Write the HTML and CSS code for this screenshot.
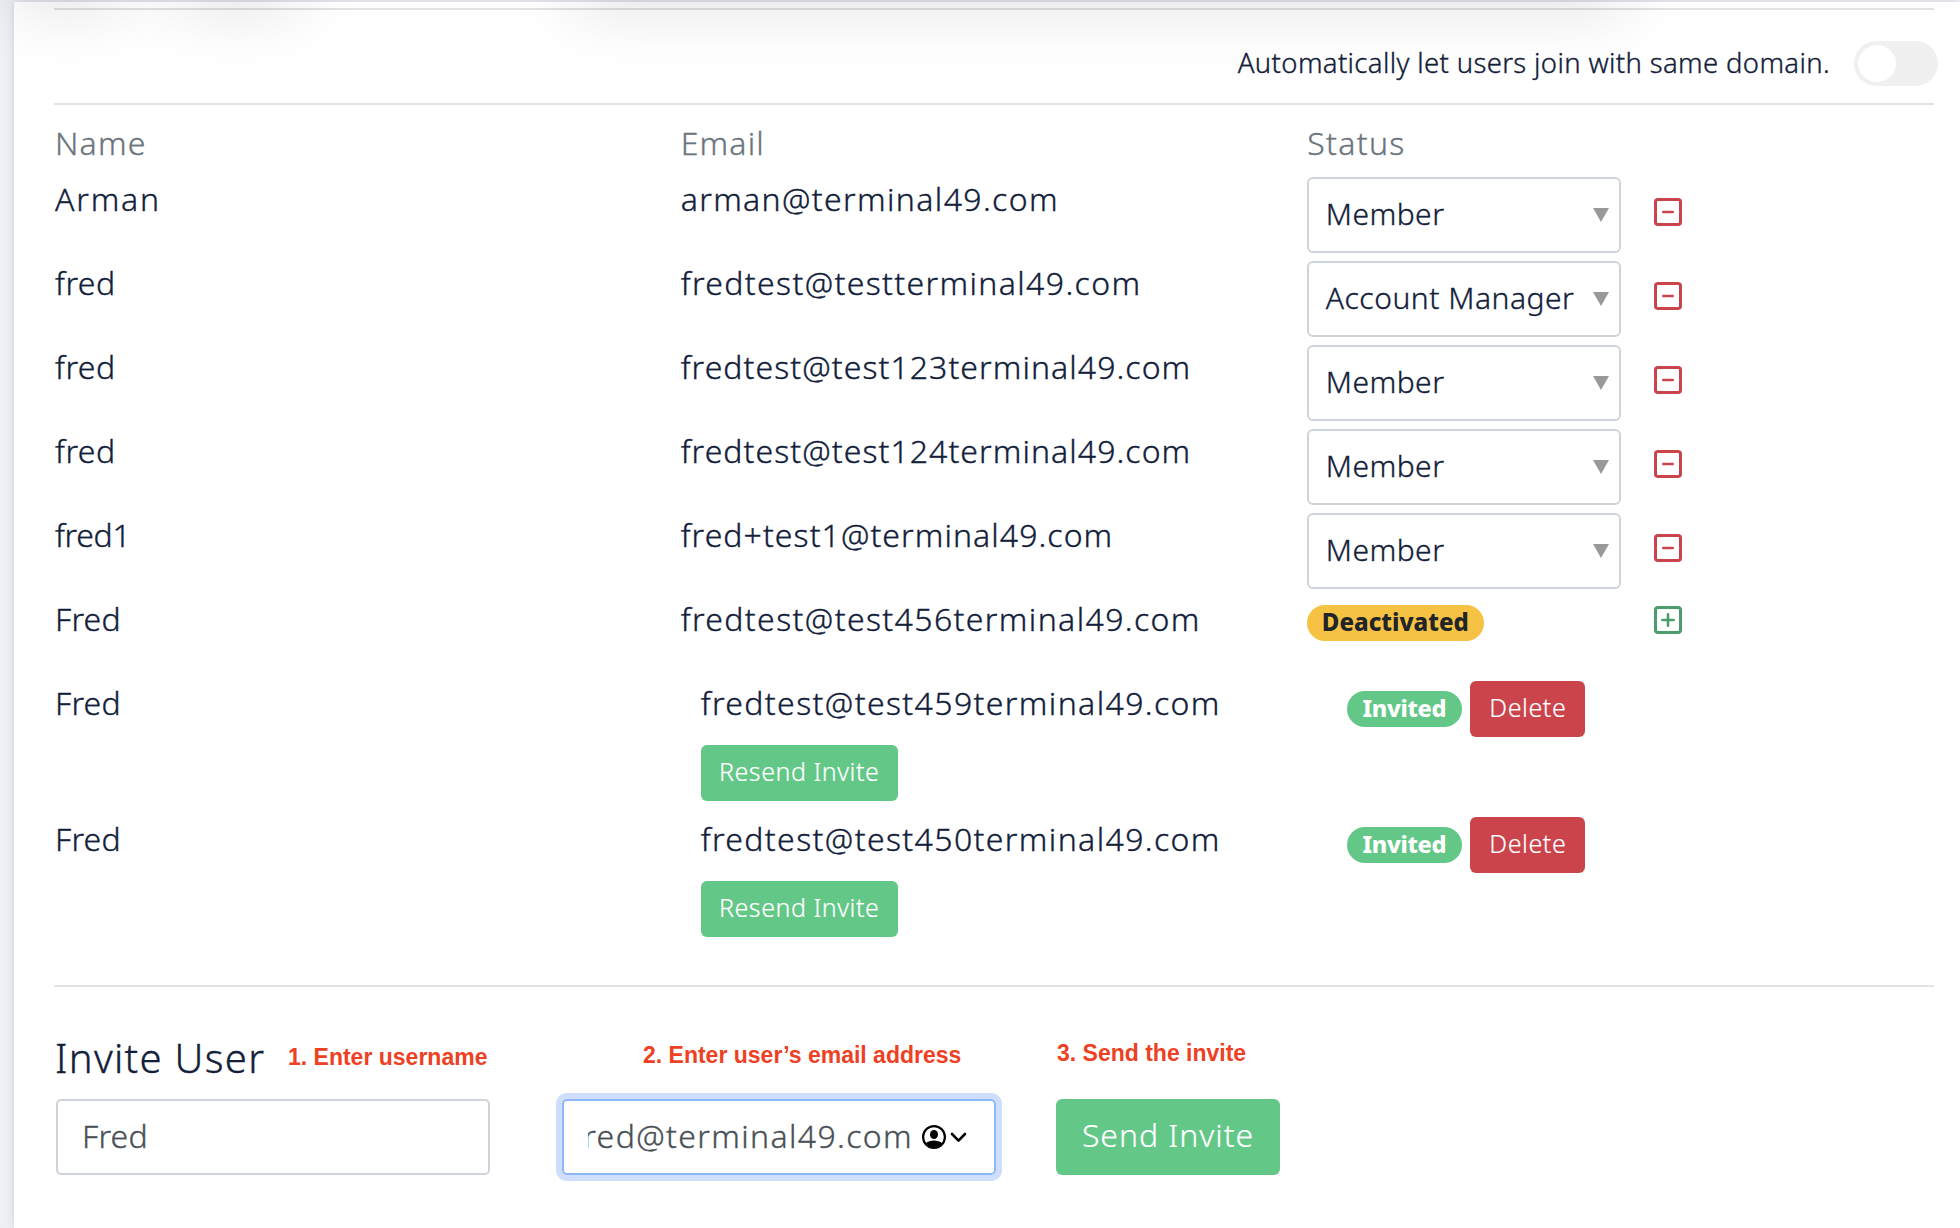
FILE: index.html
```html
<!DOCTYPE html>
<html lang="en">
<head>
<meta charset="utf-8">
<title>Account users</title>
<link rel="stylesheet" href="styles.css">
</head>
<body>
<svg width="0" height="0" class="sprite" aria-hidden="true">
  <symbol id="minus" viewBox="0 0 28 28"><rect x="1.5" y="1.5" width="25" height="25" rx="2.5" fill="none" stroke="currentColor" stroke-width="3"/><path d="M9.300 14h9.400" stroke="currentColor" stroke-width="2.6" stroke-linecap="round"/></symbol>
  <symbol id="plus" viewBox="0 0 28 28"><rect x="1.5" y="1.5" width="25" height="25" rx="2.5" fill="none" stroke="currentColor" stroke-width="3"/><path d="M8.3 14h11.4M14 8.3v11.4" stroke="currentColor" stroke-width="2.6" stroke-linecap="round"/></symbol>
</svg>
<main class="card">
  <section class="domain">
    <span class="domain-label">Automatically let users join with same domain.</span>
    <span class="toggle"><i class="knob"></i></span>
  </section>
  <section class="users">
    <div class="row head"><span class="name">Name</span><span>Email</span><span class="ls-status">Status</span></div>
    <div class="row"><span class="name arman">Arman</span><span>arman@terminal49.com</span><div class="select"><span class="member">Member</span><i class="arrow"></i></div><svg class="icon"><use href="#minus"/></svg></div>
    <div class="row"><span class="name">fred</span><span>fredtest@testterminal49.com</span><div class="select"><span>Account Manager</span><i class="arrow"></i></div><svg class="icon"><use href="#minus"/></svg></div>
    <div class="row"><span class="name">fred</span><span class="digits">fredtest@test123terminal49.com</span><div class="select"><span class="member">Member</span><i class="arrow"></i></div><svg class="icon"><use href="#minus"/></svg></div>
    <div class="row"><span class="name">fred</span><span class="digits">fredtest@test124terminal49.com</span><div class="select"><span class="member">Member</span><i class="arrow"></i></div><svg class="icon"><use href="#minus"/></svg></div>
    <div class="row"><span class="name numbered">fred1</span><span class="digits">fred+test1@terminal49.com</span><div class="select"><span class="member">Member</span><i class="arrow"></i></div><svg class="icon"><use href="#minus"/></svg></div>
    <div class="row"><span class="name capital">Fred</span><span class="wide">fredtest@test456terminal49.com</span><div class="status"><span class="badge warning">Deactivated</span></div><svg class="icon add"><use href="#plus"/></svg></div>
    <div class="row invited"><span class="name capital">Fred</span><div class="email"><span class="wide">fredtest@test459terminal49.com</span><span class="btn resend">Resend Invite</span></div><div class="actions"><span class="badge success">Invited</span><span class="btn delete">Delete</span></div></div>
    <div class="row invited"><span class="name capital">Fred</span><div class="email"><span class="wide">fredtest@test450terminal49.com</span><span class="btn resend">Resend Invite</span></div><div class="actions"><span class="badge success">Invited</span><span class="btn delete">Delete</span></div></div>
  </section>
  <section class="invite">
    <h2>Invite User</h2>
    <form class="form">
      <div class="field capital">Fred</div>
      <div class="field focused">
        <div class="value"><span>fred@terminal49.com</span></div>
        <svg class="autofill" viewBox="0 0 46 24"><circle cx="12" cy="12" r="10.9" fill="none" stroke="#000" stroke-width="2.2"/><ellipse cx="12" cy="9.5" rx="4" ry="4.6"/><path d="M3.6 18.6C6 16.4 9 15.6 12 15.6s6 .8 8.400 3C18.300 21.500 15.300 23 12 23s-6.300-1.500-8.400-4.400z"/><path d="M30 9l6.500 6.600L43 9" fill="none" stroke="#000" stroke-width="2.6" stroke-linecap="round" stroke-linejoin="round"/></svg>
      </div>
      <div class="btn send">Send Invite</div>
    </form>
  </section>
</main>
<div class="shade shade-a"></div><div class="shade shade-b"></div><div class="shade shade-c"></div>
<span class="note note-1">1. Enter username</span>
<span class="note note-2">2. Enter user’s email address</span>
<span class="note note-3">3. Send the invite</span>
</body>
</html>
```
FILE: styles.css
```css
* { box-sizing: border-box; }
body {
  margin: 0;
  width: 1960px;
  height: 1228px;
  overflow: hidden;
  position: relative;
  background: #eff0f6;
  padding: 2px 0 0 14px;
  font: 300 32px/43px "Noto Sans", sans-serif;
  color: #12203a;
  letter-spacing: 1.36px;
  -webkit-text-stroke: .35px currentColor;
}
.sprite { position: absolute; }
.card {
  height: 1226px;
  padding: 6px 26px 0 40px;
  background: #fff;
  box-shadow: 0 0 9px rgba(0, 0, 0, .13);
}
.domain {
  height: 97px;
  border: solid #e2e2e2;
  border-width: 2px 0;
  display: flex;
  align-items: center;
  justify-content: flex-end;
  padding-top: 12px;
  gap: 24px;
}
.domain-label { font-size: 27.5px; letter-spacing: .35px; margin-top: -1px; }
.toggle {
  width: 84px;
  height: 45px;
  margin: 2px -4px 0 0;
  border-radius: 23px;
  background: #f0f0f0;
  padding: 4px;
}
.knob { display: block; width: 38px; height: 37px; border-radius: 50%; background: #fff; }
.users { padding-top: 16px; height: 882px; border-bottom: 2px solid #e4e4e6; }
.row {
  display: grid;
  grid-template-columns: 626.67px 626.67px 313.33px 1fr;
  height: 84px;
}
.name { padding-left: 1px; letter-spacing: .5px; }
.head { height: 56px; color: #6c757d; letter-spacing: 1.2px; }
.head .name { letter-spacing: 1.2px; }
.ls-status { letter-spacing: 1.3px; }
.row .arman { letter-spacing: 1.8px; }
.digits { letter-spacing: 1.06px; }
.numbered { letter-spacing: -.3px; }
.capital { letter-spacing: .2px; }
.wide { letter-spacing: 1.38px; }
.select {
  height: 76px;
  border: 2px solid #ced4da;
  border-radius: 6px;
  display: flex;
  align-items: center;
  justify-content: space-between;
  padding: 0 10px 4px 16.5px;
  font-size: 30px;
  letter-spacing: .52px;
}
.member { letter-spacing: .45px; }
.arrow { border: solid transparent; border-width: 14px 8px 0; border-top-color: #999; margin-top: 4px; }
.icon { width: 28px; height: 28px; margin: 21px 0 0 33px; color: #cc444b; }
.icon.add { margin-top: 9px; color: #4b9e6b; }
.status { padding-top: 8px; line-height: 0; }
.badge {
  display: inline-block;
  height: 36px;
  border-radius: 18px;
  font-size: 24px;
  font-weight: 800;
  line-height: 34px;
  text-align: center;
  letter-spacing: 0;
  -webkit-text-stroke: 0;
}
.warning { width: 177px; padding-right: 1px; background: #f5c243; color: #212529; }
.success { width: 115px; padding-right: 1px; background: #63c787; color: #fff; font-size: 23.5px; letter-spacing: -.35px; }
.invited { height: 136px; }
.email { padding-left: 20px; display: flex; flex-direction: column; align-items: flex-start; }
.actions { display: flex; gap: 8px; padding-left: 40px; height: 56px; align-items: center; }
.btn { border-radius: 6px; color: #fff; text-align: center; font-size: 25px; -webkit-text-stroke: .2px #fff; }
.resend { width: 197px; height: 56px; line-height: 53px; margin-top: 21px; background: #63c787; letter-spacing: .55px; }
.delete { width: 115px; height: 56px; line-height: 53px; background: #cc444b; letter-spacing: .6px; }
.invite { padding-top: 44px; }
h2 { margin: 0; padding-left: 1px; font-size: 40px; font-weight: 300; line-height: 54px; letter-spacing: 1.3px; }
.form { display: flex; padding: 14px 0 0 2px; }
.field {
  width: 434px;
  height: 76px;
  border: 2px solid #ced4da;
  border-radius: 5px;
  padding: 0 24px;
  line-height: 70px;
  color: #495057;
}
.focused { margin: 0 60px 0 72px; border-color: #8cb8f8; box-shadow: 0 0 0 6px #cfdefd; display: flex; align-items: center; }
.value { width: 325px; height: 72px; overflow: hidden; display: flex; justify-content: flex-end; flex: none; }
.autofill { width: 46px; height: 24px; margin-left: 9px; flex: none; }
.send { width: 224px; height: 76px; font-size: 32px; line-height: 71px; background: #63c787; letter-spacing: .95px; }
.shade { position: absolute; top: -100px; height: 100px; box-shadow: 0 4px 72px rgba(0, 0, 0, .13); }
.shade-a { left: 10px; width: 115px; }
.shade-b { left: 172px; width: 128px; }
.shade-c { left: 572px; width: 1056px; }
.note {
  position: absolute;
  font: bold 23px/26px "Liberation Sans", sans-serif;
  letter-spacing: 0;
  color: #ee4023;
  white-space: nowrap;
  -webkit-text-stroke: 0;
}
.note-1 { left: 288px; top: 1044px; }
.note-2 { left: 643px; top: 1042px; }
.note-3 { left: 1057px; top: 1040px; }
```
